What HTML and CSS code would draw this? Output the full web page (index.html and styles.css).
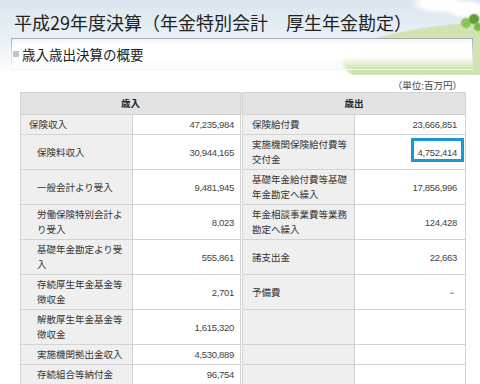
FILE: index.html
```html
<!DOCTYPE html>
<html lang="ja">
  <head>
    <meta charset="utf-8" />
    <meta name="viewport" content="width=device-width, initial-scale=1" />
    <title>平成29年度決算（年金特別会計　厚生年金勘定）</title>
    <link rel="stylesheet" href="styles.css">
  </head>
  <body>
    <header class="page-head">
      <h1 class="title">平成29年度決算（年金特別会計　厚生年金勘定）</h1>
      <div class="section-box">
        <h2 class="section-title"><span class="bullet"></span>歳入歳出決算の概要</h2>
      </div>
    </header>
    <p class="unit">（単位:百万円）</p>
    <table class="budget">
      <colgroup>
        <col class="c1"><col class="c2"><col class="c3"><col class="c4">
      </colgroup>
      <tr>
        <th colspan="2">歳入</th>
        <th colspan="2" class="split">歳出</th>
      </tr>
      <tr>
        <td class="label">保険収入</td>
        <td class="num">47,235,984</td>
        <td class="label split">保険給付費</td>
        <td class="num">23,666,851</td>
      </tr>
      <tr>
        <td class="label sub">保険料収入</td>
        <td class="num">30,944,165</td>
        <td class="label split">実施機関保険給付費等<br>交付金</td>
        <td class="num mark"><span class="highlight"></span>4,752,414</td>
      </tr>
      <tr>
        <td class="label sub">一般会計より受入</td>
        <td class="num">9,481,945</td>
        <td class="label split">基礎年金給付費等基礎<br>年金勘定へ繰入</td>
        <td class="num">17,856,996</td>
      </tr>
      <tr>
        <td class="label sub">労働保険特別会計よ<br>り受入</td>
        <td class="num">8,023</td>
        <td class="label split">年金相談事業費等業務<br>勘定へ繰入</td>
        <td class="num">124,428</td>
      </tr>
      <tr>
        <td class="label sub">基礎年金勘定より受<br>入</td>
        <td class="num">555,861</td>
        <td class="label split">諸支出金</td>
        <td class="num">22,663</td>
      </tr>
      <tr>
        <td class="label sub">存続厚生年金基金等<br>徴収金</td>
        <td class="num">2,701</td>
        <td class="label split">予備費</td>
        <td class="num">－</td>
      </tr>
      <tr>
        <td class="label sub">解散厚生年金基金等<br>徴収金</td>
        <td class="num">1,615,320</td>
        <td class="label split"></td>
        <td class="num"></td>
      </tr>
      <tr>
        <td class="label sub">実施機関拠出金収入</td>
        <td class="num">4,530,889</td>
        <td class="label split"></td>
        <td class="num"></td>
      </tr>
      <tr>
        <td class="label sub">存続組合等納付金</td>
        <td class="num">96,754</td>
        <td class="label split"></td>
        <td class="num"></td>
      </tr>
    </table>
  </body>
</html>
```

FILE: styles.css
```css
html, body {
  margin: 0;
  overflow: hidden;
}

body {
  background-color: #fff;
  color: #333;
  font-family: "Liberation Sans", "Noto Sans CJK JP", sans-serif;
}

.page-head {
  padding: 11px 7px 0 11px;
  height: 64px;
  background:
    radial-gradient(circle at 474px 19px, #5f9f35 0 4px, rgba(95,159,53,0) 6px),
    radial-gradient(circle at 466px 23px, #8fc45a 0 4px, rgba(143,196,90,0) 6px),
    radial-gradient(circle at 478px 27px, #7bb648 0 3px, rgba(123,182,72,0) 5px),
    radial-gradient(ellipse 190px 42px at 530px 62px, #cfe4b2 0 97%, rgba(207,228,178,0) 100%),
    radial-gradient(ellipse 28px 11px at 438px 3px, #fff 0 55%, rgba(255,255,255,0) 100%),
    radial-gradient(ellipse 24px 10px at 466px 9px, #fff 0 55%, rgba(255,255,255,0) 100%),
    linear-gradient(#d9e6ef, #eaf1f6 40px, #fff 75px);
}

.title {
  margin: 0 0 0 3px;
  font-family: "Noto Sans CJK JP", sans-serif;
  font-size: 18px;
  font-weight: normal;
  line-height: 22px;
  color: #222;
}

.section-box {
  margin-top: 5px;
  height: 30px;
  border: 1px solid;
  border-image: linear-gradient(#a9a9a9, #dcdcdc 50%, rgba(255,255,255,0)) 1;
  background: linear-gradient(#f4f4f4, #fff 6px, #fff 60%, rgba(255,255,255,0));
}

.section-title {
  display: flex;
  align-items: center;
  gap: 3px;
  margin: 0;
  padding: 6px 0 0 1px;
  font-family: "Noto Sans CJK JP", sans-serif;
  font-size: 13.5px;
  font-weight: normal;
  line-height: 18px;
  color: #222;
}

.bullet {
  width: 6px;
  height: 6px;
  background-color: #c4c4c4;
}

.unit {
  margin: 0;
  padding: 4px 18px 0 0;
  height: 13px;
  text-align: right;
  font-family: "Noto Sans CJK JP", sans-serif;
  font-size: 9.5px;
  line-height: 13px;
  color: #444;
}

.budget {
  margin-left: 20px;
  width: 445px;
  table-layout: fixed;
  border-collapse: collapse;
  font-size: 9.5px;
  line-height: 15px;
}

.c1 { width: 112px; }
.c2 { width: 109px; }
.c3 { width: 113px; }
.c4 { width: 111px; }

.budget th,
.budget td {
  border: 1px solid #d3d3d3;
  padding: 2px 8px;
  vertical-align: middle;
}

.budget th {
  padding: 3px 0;
  background-color: #e3e3e3;
  font-family: "Noto Sans CJK JP", sans-serif;
  font-weight: bold;
  text-align: center;
  color: #222;
}

.budget .split {
  border-left: 3px double #d3d3d3;
}

.label {
  background-color: #efefef;
  font-family: "Noto Sans CJK JP", sans-serif;
  color: #333;
  white-space: nowrap;
}

.budget td.label {
  padding-right: 0;
}

.budget td.label.sub {
  padding-left: 16px;
}

.budget td.label.split {
  padding-left: 9px;
}

.num {
  background-color: #fff;
  text-align: right;
  font-family: "Liberation Sans", sans-serif;
  letter-spacing: -0.3px;
  color: #444;
}

.budget td.num {
  padding-right: 6px;
}

.budget td.num:last-child {
  padding-right: 8px;
}

.mark {
  position: relative;
}

.highlight {
  position: absolute;
  top: 3px;
  right: 1px;
  width: 53px;
  height: 24px;
  box-sizing: border-box;
  border: 3px solid #1b97d4;
}
```
